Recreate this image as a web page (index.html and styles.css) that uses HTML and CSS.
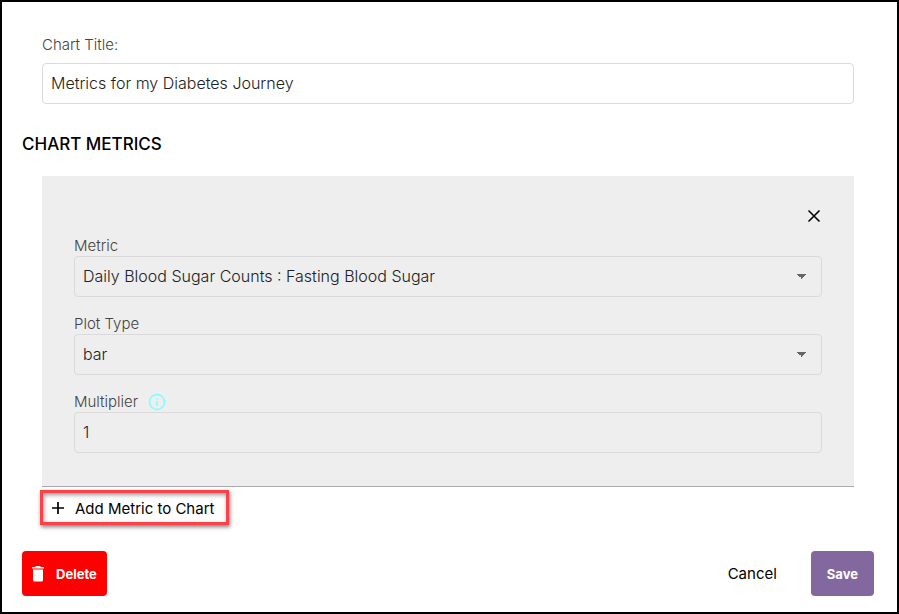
FILE: index.html
```html
<!DOCTYPE html>
<html lang="en">
  <head>
    <meta charset="UTF-8" />
    <meta name="viewport" content="width=device-width, initial-scale=1.0" />
    <title>Edit Chart</title>
    <link rel="stylesheet" href="styles.css">
  </head>
  <body>
    <form class="dialog">
      <div class="field title-field">
        <label for="chart-title">Chart Title:</label>
        <input class="control" id="chart-title" type="text" value="Metrics for my Diabetes Journey" />
      </div>

      <h2>CHART METRICS</h2>

      <div class="metrics">
        <div class="metric">
          <button class="remove" type="button" aria-label="Remove metric">
            <svg width="16" height="16" viewBox="0 0 16 16" fill="none" stroke="#000" stroke-width="1.6">
              <path d="M2.5 2.5l11 11M13.5 2.5l-11 11" />
            </svg>
          </button>
          <div class="field">
            <label for="metric">Metric</label>
            <select class="control" id="metric">
              <option>Daily Blood Sugar Counts : Fasting Blood Sugar</option>
            </select>
          </div>
          <div class="field">
            <label for="plot-type">Plot Type</label>
            <select class="control" id="plot-type">
              <option>bar</option>
            </select>
          </div>
          <div class="field">
            <div class="label-row">
              <label for="multiplier">Multiplier</label>
              <svg width="18" height="18" viewBox="0 0 18 18" fill="none" stroke="#84ffff" stroke-width="1.6">
                <circle cx="9" cy="9" r="7.5" />
                <path d="M9 8v5M9 5v1.6" />
              </svg>
            </div>
            <input class="control" id="multiplier" type="text" value="1" />
          </div>
        </div>

        <button class="add" type="button">
          <svg width="14" height="14" viewBox="0 0 14 14" fill="none" stroke="#000" stroke-width="1.7">
            <path d="M7 1v12M1 7h12" />
          </svg>
          Add Metric to Chart
        </button>
      </div>

      <div class="actions">
        <button class="btn delete" type="button">
          <svg width="12" height="16" viewBox="0 0 12 16" fill="#fff">
            <path d="M0 1h3.2L4 0h4l.8 1H12v1.5H0zM1 3.5h10V14a1.6 1.6 0 0 1-1.6 1.6H2.6A1.6 1.6 0 0 1 1 14z" />
          </svg>
          Delete
        </button>
        <button class="cancel" type="button">Cancel</button>
        <button class="btn save" type="submit">Save</button>
      </div>
    </form>
  </body>
</html>
```
FILE: styles.css
```css
* {
  box-sizing: border-box;
}

body {
  margin: 0;
  font-family: Inter, sans-serif;
  font-size: 15px;
  font-weight: 300;
  color: #212121;
}

.dialog {
  min-height: 100vh;
  padding: 33px 23px 16px 20px;
  border: 2px solid #000;
  background-color: #fff;
}

.field {
  display: flex;
  flex-direction: column;
}

.title-field {
  gap: 8px;
  margin: 0 20px;
}

label {
  line-height: 20px;
  color: #444;
}

.label-row {
  display: flex;
  align-items: center;
  gap: 10px;
}

.control {
  width: 100%;
  height: 41px;
  padding: 0 8px 1px;
  border: 1px solid #dadada;
  border-radius: 4px;
  background-color: transparent;
  font: inherit;
  font-size: 16px;
  color: inherit;
}

select.control {
  appearance: none;
  background-image: linear-gradient(to bottom left, #666 50%, transparent 50%), linear-gradient(to bottom right, #666 50%, transparent 50%);
  background-position: right 19px center, right 14px center;
  background-size: 5px 5px;
  background-repeat: no-repeat;
}

h2 {
  margin: 28px 0 20px;
  font-size: 17px;
  font-weight: 500;
  line-height: 24px;
  color: #000;
}

.metrics {
  margin: 0 20px;
}

.metric {
  display: flex;
  flex-direction: column;
  gap: 17px;
  padding: 32px 32px 33px;
  border-bottom: 1px solid #aaa;
  background-color: #eee;
}

button {
  padding: 0;
  border: none;
  background: none;
  font: inherit;
  cursor: pointer;
}

.remove {
  display: flex;
  align-self: flex-end;
  margin-bottom: -5px;
}

.add {
  display: flex;
  align-items: center;
  gap: 10px;
  height: 35px;
  margin: 3px 0 26px -2px;
  padding: 1px 12px 0 8px;
  border: 3px solid #fa4248;
  box-shadow: 1px 2px 4px rgba(0, 0, 0, 0.5), inset 1px 2px 4px rgba(0, 0, 0, 0.4);
  font-weight: 400;
  color: #000;
}

.actions {
  display: flex;
  align-items: center;
}

.btn {
  display: flex;
  align-items: center;
  justify-content: center;
  height: 45px;
  border-radius: 4px;
  font-size: 13px;
  font-weight: 700;
  color: #fff;
}

.delete {
  gap: 12px;
  padding: 0 10px;
  background-color: #f00;
}

.cancel {
  margin-left: auto;
  margin-right: 34px;
  font-weight: 400;
  color: #000;
}

.save {
  padding: 0 16px;
  background-color: #83689f;
}
```
